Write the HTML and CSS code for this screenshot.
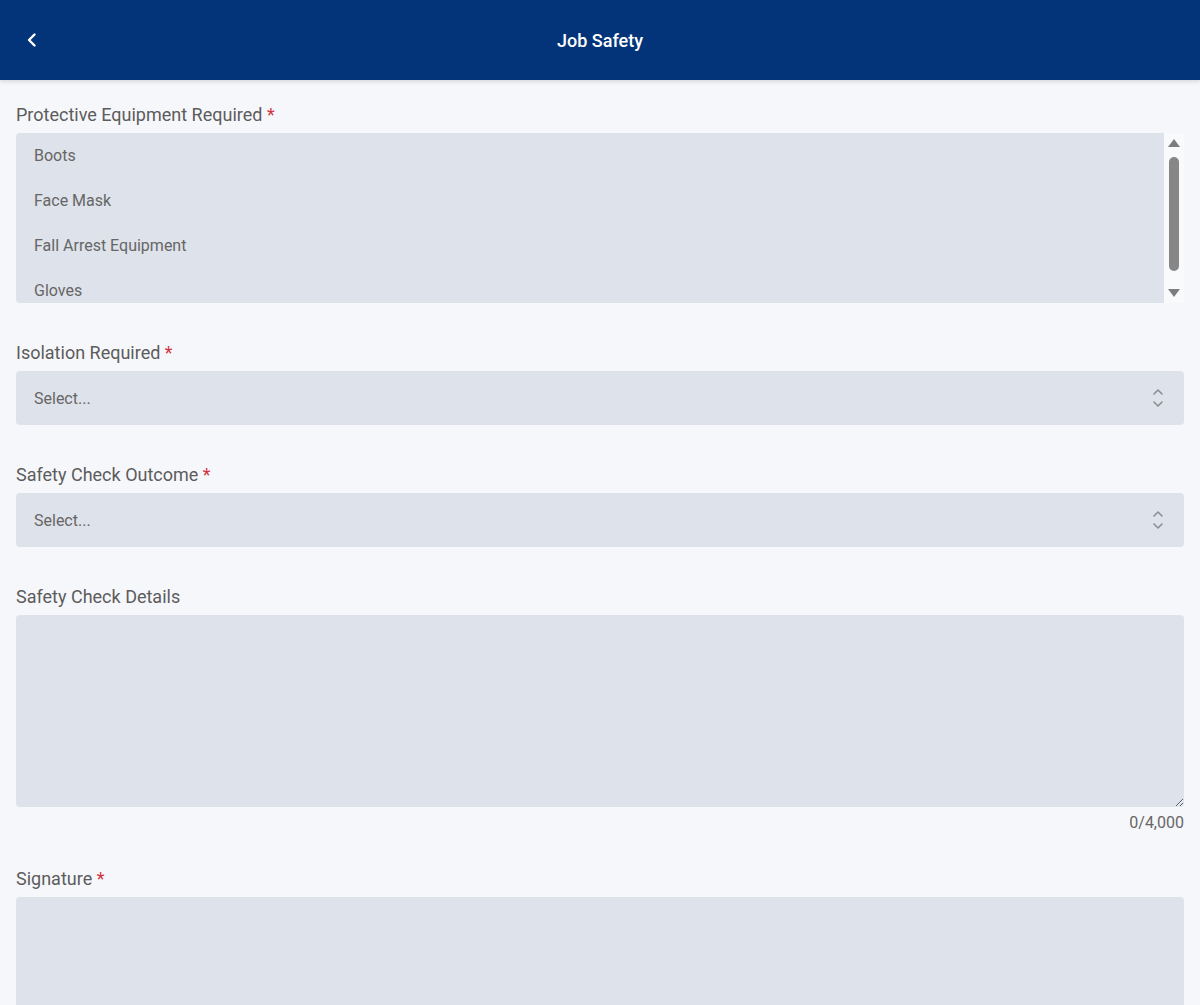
FILE: index.html
```html
<!DOCTYPE html>
<html lang="en">
<head>
<meta charset="utf-8">
<title>Job Safety</title>
<link rel="stylesheet" href="styles.css">
</head>
<body>
<header class="topbar">
  <button class="back" aria-label="Back">
    <svg width="14" height="16" viewBox="0 0 14 16"><path d="M9.5 2.5 L4 8 L9.5 13.5" fill="none" stroke="#fff" stroke-width="2.4" stroke-linecap="round" stroke-linejoin="round"/></svg>
  </button>
  <h1 class="title">Job Safety</h1>
</header>

<main class="form">
  <section class="field">
    <label class="label">Protective Equipment Required <span class="req">*</span></label>
    <div class="listbox">
      <ul class="options">
        <li>Boots</li>
        <li>Face Mask</li>
        <li>Fall Arrest Equipment</li>
        <li>Gloves</li>
        <li>Hard Hat</li>
        <li>Hearing Protection</li>
        <li>High Visibility Vest</li>
        <li>Safety Glasses</li>
      </ul>
      <div class="scrollbar">
        <span class="arrow up"></span>
        <span class="thumb"></span>
        <span class="arrow down"></span>
      </div>
    </div>
  </section>

  <section class="field">
    <label class="label">Isolation Required <span class="req">*</span></label>
    <div class="select">
      <span>Select...</span>
      <svg class="updown" width="12" height="22" viewBox="0 0 12 22"><path d="M2 7 L6 3 L10 7 M2 15 L6 19 L10 15" fill="none" stroke="#8a8d93" stroke-width="1.6" stroke-linecap="round" stroke-linejoin="round"/></svg>
    </div>
  </section>

  <section class="field">
    <label class="label">Safety Check Outcome <span class="req">*</span></label>
    <div class="select">
      <span>Select...</span>
      <svg class="updown" width="12" height="22" viewBox="0 0 12 22"><path d="M2 7 L6 3 L10 7 M2 15 L6 19 L10 15" fill="none" stroke="#8a8d93" stroke-width="1.6" stroke-linecap="round" stroke-linejoin="round"/></svg>
    </div>
  </section>

  <section class="field field-tight">
    <label class="label">Safety Check Details</label>
    <textarea class="details"></textarea>
    <div class="counter">0/4,000</div>
  </section>

  <section class="field">
    <label class="label">Signature <span class="req">*</span></label>
    <div class="signature"></div>
  </section>
</main>
</body>
</html>
```

FILE: styles.css
```css
* { box-sizing: border-box; }

html, body {
  margin: 0;
  padding: 0;
  background: #f6f7fb;
  font-family: Roboto, "Liberation Sans", Arial, sans-serif;
  color: #5c5c5c;
  overflow: hidden;
}

.topbar {
  height: 80px;
  background: #033479;
  display: flex;
  align-items: center;
  justify-content: center;
  position: relative;
  box-shadow: 0 2px 4px rgba(0, 0, 0, 0.12);
}

.back {
  position: absolute;
  left: 22px;
  top: 30px;
  width: 20px;
  height: 20px;
  padding: 0;
  border: 0;
  background: none;
  display: flex;
  align-items: center;
  justify-content: center;
}

.title {
  margin: 0;
  color: #fff;
  font-size: 18px;
  font-weight: 500;
  line-height: 24px;
  padding-top: 1px;
}

.form {
  padding: 23px 16px 0;
}

.field {
  margin-bottom: 38px;
}

.field-tight {
  margin-bottom: 36px;
}

.label {
  display: block;
  font-size: 18px;
  line-height: 24px;
  margin-bottom: 6px;
  color: #5c5c5c;
}

.req {
  color: #d2343f;
}

.listbox {
  height: 170px;
  display: flex;
  background: #dee2ea;
  border-radius: 4px 0 0 4px;
  overflow: hidden;
}

.options {
  flex: 1;
  list-style: none;
  margin: 0;
  padding: 0;
  overflow: hidden;
}

.options li {
  height: 45px;
  line-height: 45px;
  padding-left: 18px;
  font-size: 16px;
  color: #666;
}

.scrollbar {
  width: 20px;
  background: #f9fafc;
  display: flex;
  flex-direction: column;
  align-items: center;
  padding: 6px 0;
}

.arrow {
  width: 0;
  height: 0;
  border-left: 6px solid transparent;
  border-right: 6px solid transparent;
}

.arrow.up {
  border-bottom: 8px solid #7d7d7d;
}

.arrow.down {
  border-top: 8px solid #7d7d7d;
}

.thumb {
  width: 10px;
  flex: 1;
  margin: 10px 0 18px;
  background: #878787;
  border-radius: 5px;
}

.select {
  height: 54px;
  background: #dee2ea;
  border-radius: 4px;
  display: flex;
  align-items: center;
  justify-content: space-between;
  padding: 0 20px 0 18px;
  font-size: 16px;
  color: #666;
}

.updown {
  display: block;
}

.details {
  display: block;
  width: 100%;
  height: 192px;
  margin: 0;
  border: 0;
  border-radius: 4px;
  background: #dee2ea;
  resize: vertical;
  font: inherit;
  outline: none;
}

.counter {
  text-align: right;
  font-size: 16px;
  line-height: 16px;
  margin-top: 8px;
  color: #666;
}

.signature {
  height: 160px;
  margin-top: 1px;
  background: #dee2ea;
  border-radius: 4px;
}
```
